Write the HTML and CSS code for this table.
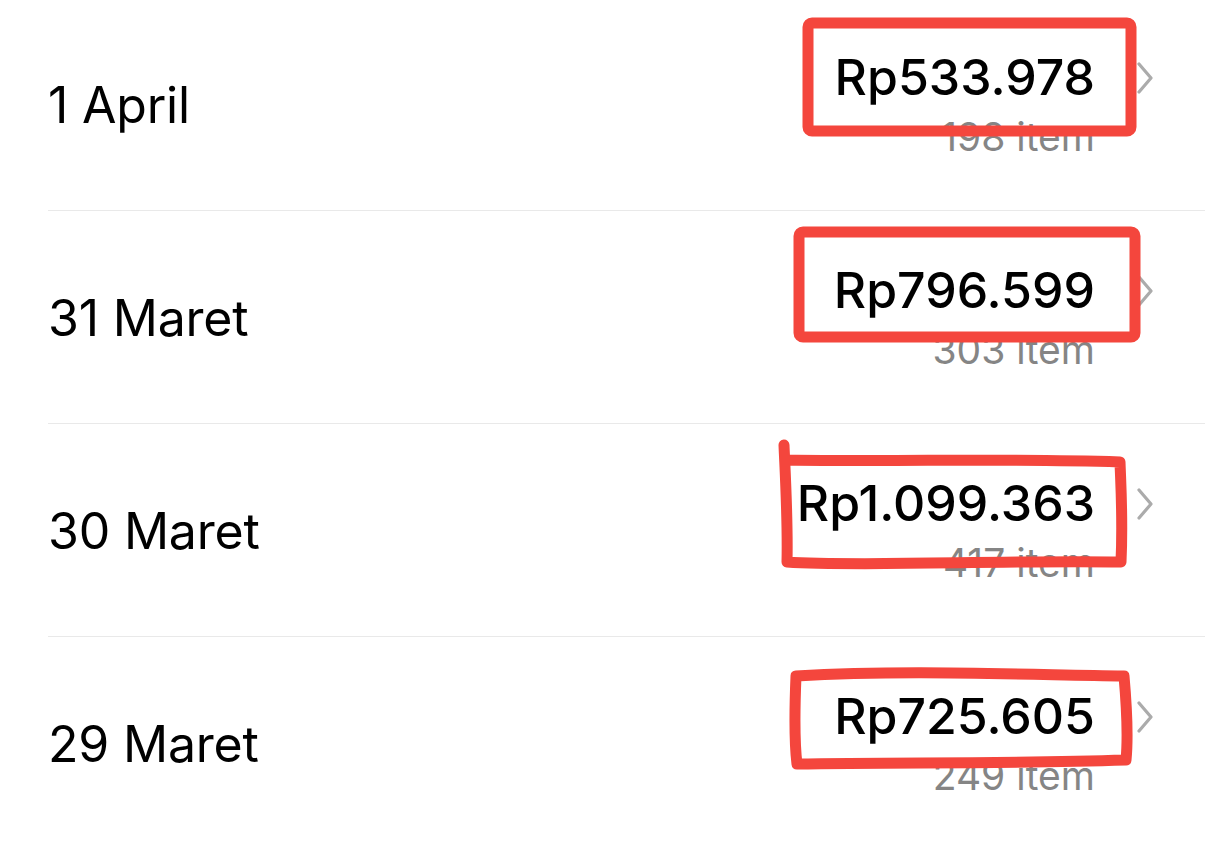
FILE: index.html
```html
<!DOCTYPE html>
<html lang="id">
<head>
<meta charset="utf-8">
<link rel="stylesheet" href="styles.css">
</head>
<body>
<main class="list">
  <div class="row">
    <div class="date">1 April</div>
    <div class="summary">
      <div class="amount">Rp533.978</div>
      <div class="count">198 item</div>
    </div>
    <svg class="chev" viewBox="0 0 16 32"><path d="M2 2 L14 16 L2 30"/></svg>
  </div>
  <div class="row">
    <div class="date">31 Maret</div>
    <div class="summary">
      <div class="amount">Rp796.599</div>
      <div class="count">303 item</div>
    </div>
    <svg class="chev" viewBox="0 0 16 32"><path d="M2 2 L14 16 L2 30"/></svg>
  </div>
  <div class="row">
    <div class="date">30 Maret</div>
    <div class="summary">
      <div class="amount">Rp1.099.363</div>
      <div class="count">417 item</div>
    </div>
    <svg class="chev" viewBox="0 0 16 32"><path d="M2 2 L14 16 L2 30"/></svg>
  </div>
  <div class="row">
    <div class="date">29 Maret</div>
    <div class="summary">
      <div class="amount">Rp725.605</div>
      <div class="count">249 item</div>
    </div>
    <svg class="chev" viewBox="0 0 16 32"><path d="M2 2 L14 16 L2 30"/></svg>
  </div>
</main>
<svg class="marks" viewBox="0 0 1205 847" width="1205" height="847">
  <rect x="808" y="23" width="323" height="108" rx="4"/>
  <rect x="799" y="232" width="336" height="105" rx="4"/>
  <path d="M784 445 C785 470 788 520 787 562 C860 567 1000 560 1121 562 C1123 520 1121 490 1120 462 C1000 458 900 462 788 460"/>
  <path d="M796 676 C900 670 1000 674 1124 676 C1127 710 1128 740 1126 760 C1000 764 900 762 797 764 C794 740 795 700 796 676 Z"/>
</svg>
</body>
</html>
```
FILE: styles.css
```css
html, body {
  margin: 0;
  padding: 0;
  background: #ffffff;
}
body {
  width: 1205px;
  height: 847px;
  overflow: hidden;
  position: relative;
  font-family: "Inter", "Liberation Sans", sans-serif;
  color: #000;
}
.list {
  margin-top: -2px;
  padding-left: 48px;
}
.row {
  display: flex;
  align-items: center;
  height: 212px;
  border-bottom: 1px solid #e9e9e9;
  padding-right: 52px;
}
.date {
  flex: 1;
  font-size: 50px;
  font-weight: 400;
  letter-spacing: -0.2px;
  padding-top: 2px;
}
.summary {
  text-align: right;
}
.amount {
  font-size: 50px;
  font-weight: 500;
  line-height: 56px;
}
.count {
  font-size: 39px;
  line-height: 46px;
  margin-top: 9px;
  color: #858585;
}
.chev {
  width: 16px;
  height: 32px;
  margin-left: 42px;
  margin-top: -52px;
}
.chev path {
  fill: none;
  stroke: #ababab;
  stroke-width: 3.2;
  stroke-linecap: round;
  stroke-linejoin: round;
}
.marks {
  position: absolute;
  left: 0;
  top: 0;
  pointer-events: none;
}
.marks rect, .marks path {
  fill: none;
  stroke: #f4463d;
  stroke-width: 11;
  stroke-linecap: round;
  stroke-linejoin: round;
}
```
